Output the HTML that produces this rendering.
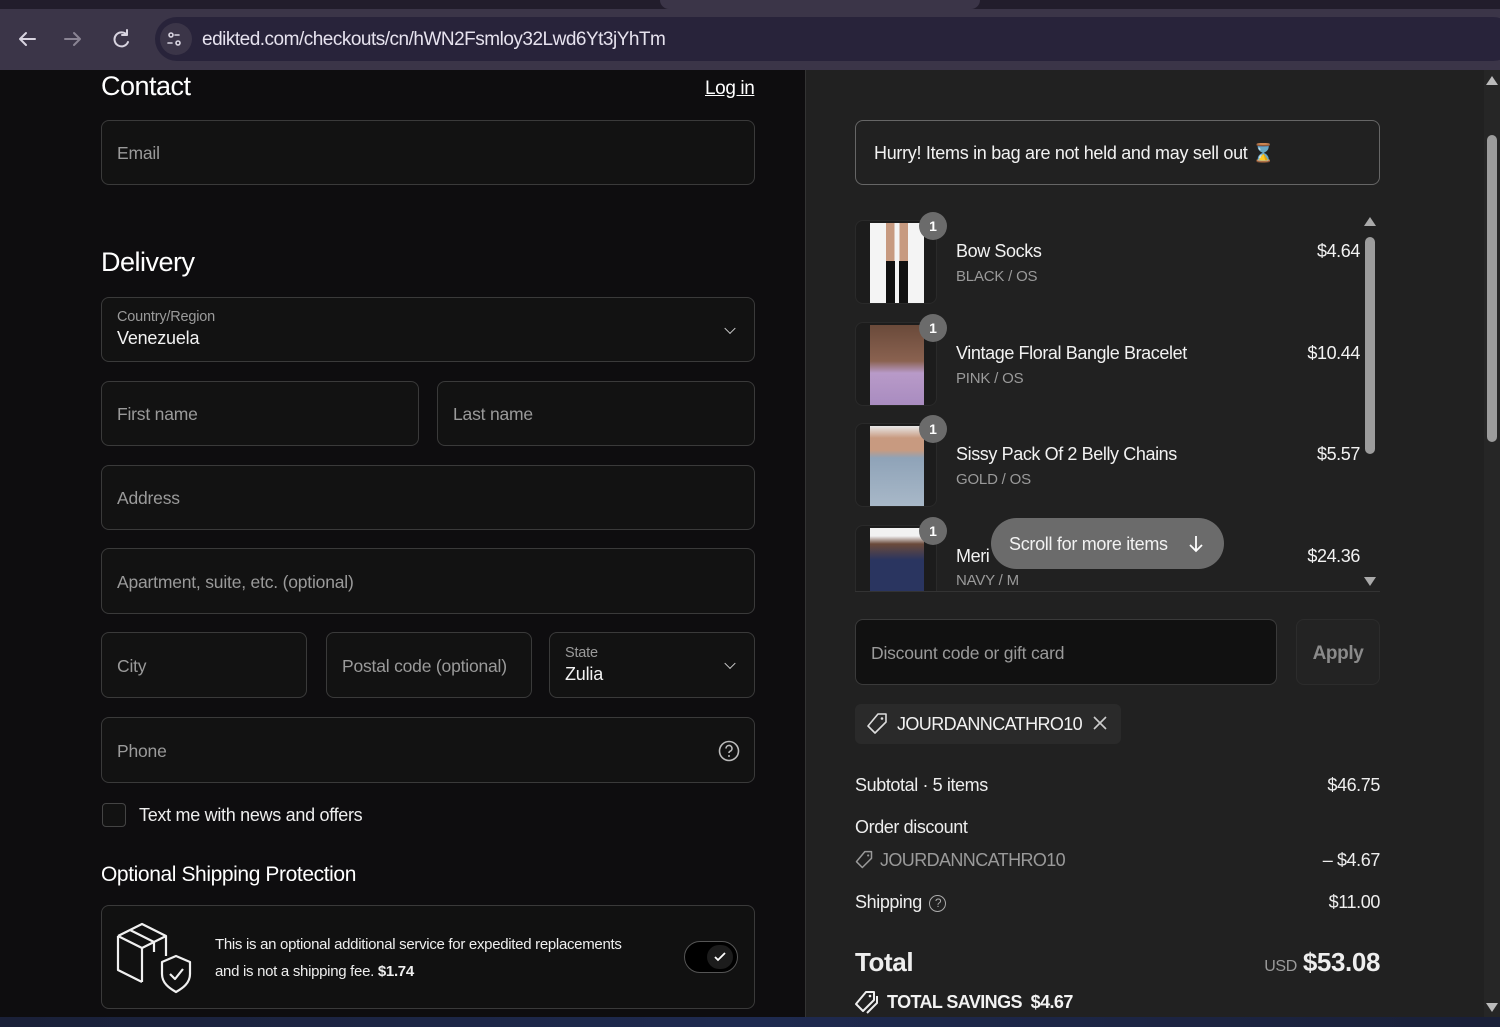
<!DOCTYPE html>
<html><head><meta charset="utf-8"><style>
*{margin:0;padding:0;box-sizing:border-box}
body{width:1500px;height:1027px;overflow:hidden;background:#0e0d0f;font-family:"Liberation Sans",sans-serif;color:#eee;position:relative}
.a{position:absolute}
.inp{position:absolute;background:#121212;border:1px solid #3a3a3a;border-radius:8px;color:#9a9a9a;font-size:17.5px;padding-left:15px;padding-top:2px;display:flex;align-items:center;letter-spacing:-0.2px}
.lbl{font-size:14.5px;color:#9a9a9a}
.chev{position:absolute;right:20px;top:50%;width:8px;height:8px;border-right:1.5px solid #ccc;border-bottom:1.5px solid #ccc;transform:translateY(-70%) rotate(45deg)}
.item{position:absolute;left:855px;width:510px;height:90px}
.thumb{position:absolute;left:0;top:0;width:82px;height:84px;border:1px solid #2a2a2a;border-radius:8px;background:#1c1c1c}
.thumb i{position:absolute;left:14px;top:2px;width:54px;height:80px;display:block}
.badge{position:absolute;left:64px;top:-8px;width:28px;height:28px;border-radius:50%;background:#6b6b6b;color:#fff;font-size:14px;font-weight:bold;text-align:center;line-height:28px}
.nm{position:absolute;left:101px;top:21px;font-size:18px;color:#f2f2f2;letter-spacing:-0.4px}
.vr{position:absolute;left:101px;top:48px;font-size:15px;color:#9a9a9a;letter-spacing:-0.2px}
.pr{position:absolute;right:5px;top:21px;font-size:18px;color:#f2f2f2;letter-spacing:-0.4px}
.row{position:absolute;left:855px;width:525px;font-size:18px;color:#eee;letter-spacing:-0.4px}
.row span{position:absolute;right:0}
</style></head><body>
<div class="a" style="left:0;top:0;width:1500px;height:10px;background:#221d2c"></div>
<div class="a" style="left:660px;top:0;width:320px;height:9px;background:#3b3548;border-radius:0 0 10px 10px"></div>
<div class="a" style="left:0;top:9px;width:1500px;height:61px;background:#3b3548"></div>
<div class="a" style="left:155px;top:17px;width:1360px;height:44px;background:#28233a;border-radius:22px"></div>
<div class="a" style="left:160px;top:23px;width:32px;height:32px;background:#3b3548;border-radius:50%"></div>
<svg class="a" style="left:0;top:25px" width="200" height="30" viewBox="0 0 200 30">
<g fill="none" stroke="#d8d4e0" stroke-width="2" stroke-linecap="round" stroke-linejoin="round">
<path d="M35 14H20M26 8l-6 6 6 6"/>
<path d="M65 14h15M74 8l6 6-6 6" stroke="#8a8494"/>
<path d="M127 10a7 7 0 1 0 1 7M127 5v5h-5"/>
<circle cx="171" cy="10" r="2" stroke-width="1.6"/><path d="M175 10h4M168 18h4" stroke-width="1.6"/><circle cx="178" cy="18" r="2" stroke-width="1.6"/>
</g></svg>
<div class="a" style="left:202px;top:29px;font-size:19px;color:#e6e2ee;letter-spacing:-0.5px">edikted.com/checkouts/cn/hWN2Fsmloy32Lwd6Yt3jYhTm</div>

<div class="a" style="left:805px;top:70px;width:680px;height:947px;background:#212121;border-left:1px solid #333"></div>
<div class="a" style="left:1484px;top:70px;width:16px;height:947px;background:#262626"></div>
<div class="a" style="left:1487px;top:135px;width:10px;height:307px;background:#9c9c9c;border-radius:5px"></div>
<div class="a" style="left:1486px;top:76px;width:0;height:0;border-left:6px solid transparent;border-right:6px solid transparent;border-bottom:9px solid #bbb"></div>
<div class="a" style="left:1486px;top:1003px;width:0;height:0;border-left:6px solid transparent;border-right:6px solid transparent;border-top:9px solid #bbb"></div>
<div class="a" style="left:0;top:1017px;width:1500px;height:10px;background:linear-gradient(90deg,#1a2038,#1e2a50 50%,#1a2038)"></div>

<div class="a" style="left:101px;top:71px;font-size:27px;color:#fff;letter-spacing:-0.5px">Contact</div>
<div class="a" style="left:705px;top:78px;font-size:19px;color:#fff;text-decoration:underline;letter-spacing:-0.4px">Log in</div>
<div class="inp" style="left:101px;top:120px;width:654px;height:65px">Email</div>
<div class="a" style="left:101px;top:247px;font-size:27px;color:#fff;letter-spacing:-0.5px">Delivery</div>
<div class="inp" style="left:101px;top:297px;width:654px;height:65px;display:block;padding-top:11px"><div class="lbl">Country/Region</div><div style="color:#f2f2f2;font-size:18px;margin-top:3px">Venezuela</div><div class="chev"></div></div>
<div class="inp" style="left:101px;top:381px;width:318px;height:65px">First name</div>
<div class="inp" style="left:437px;top:381px;width:318px;height:65px">Last name</div>
<div class="inp" style="left:101px;top:465px;width:654px;height:65px">Address</div>
<div class="inp" style="left:101px;top:548px;width:654px;height:66px">Apartment, suite, etc. (optional)</div>
<div class="inp" style="left:101px;top:632px;width:206px;height:66px">City</div>
<div class="inp" style="left:326px;top:632px;width:206px;height:66px">Postal code (optional)</div>
<div class="inp" style="left:549px;top:632px;width:206px;height:66px;display:block;padding-top:12px"><div class="lbl">State</div><div style="color:#f2f2f2;font-size:18px;margin-top:3px">Zulia</div><div class="chev"></div></div>
<div class="inp" style="left:101px;top:717px;width:654px;height:66px">Phone
<svg class="a" style="right:14px;top:22px" width="22" height="22" viewBox="0 0 22 22"><circle cx="11" cy="11" r="9.5" fill="none" stroke="#bbb" stroke-width="1.6"/><path d="M8 8.5a3 3 0 1 1 4 2.8c-.8.4-1 .9-1 1.7" fill="none" stroke="#bbb" stroke-width="1.6"/><circle cx="11" cy="16" r="1" fill="#bbb"/></svg></div>
<div class="a" style="left:102px;top:803px;width:24px;height:24px;border:1px solid #444;border-radius:4px;background:#121212"></div>
<div class="a" style="left:139px;top:805px;font-size:18px;color:#eee;letter-spacing:-0.3px">Text me with news and offers</div>
<div class="a" style="left:101px;top:863px;font-size:21px;color:#fff;letter-spacing:-0.4px">Optional Shipping Protection</div>
<div class="a" style="left:101px;top:905px;width:654px;height:104px;border:1px solid #3a3a3a;border-radius:8px;background:#111"></div>
<svg class="a" style="left:112px;top:918px" width="82" height="80" viewBox="0 0 82 80"><g fill="none" stroke="#f0f0f0" stroke-width="2.2" stroke-linejoin="round"><path d="M6 18L30 6l24 12v20M6 18v34l24 12M6 18l24 12 24-12M30 30v34M18 12l24 12v10"/><path d="M64 38l14 6v12c0 9-7 14-14 18-7-4-14-9-14-18V44z"/><path d="M58 56l5 5 8-10"/></g></svg>
<div class="a" style="left:215px;top:931px;font-size:15px;color:#eee;line-height:27px;letter-spacing:-0.3px">This is an optional additional service for expedited replacements<br>and is not a shipping fee. <b>$1.74</b></div>
<div class="a" style="left:684px;top:941px;width:54px;height:32px;border-radius:16px;background:#000;border:1px solid #555"></div>
<div class="a" style="left:707px;top:945px;width:26px;height:24px;border-radius:12px;background:#1c1c1c"></div>
<svg class="a" style="left:712px;top:949px" width="16" height="16"><path d="M3 8l3 3 7-7" fill="none" stroke="#fff" stroke-width="1.8"/></svg>

<div class="a" style="left:855px;top:120px;width:525px;height:65px;border:1px solid #666;border-radius:8px"></div>
<div class="a" style="left:874px;top:143px;font-size:18px;color:#f2f2f2;letter-spacing:-0.3px">Hurry! Items in bag are not held and may sell out <span style="color:#e8c07a">⌛</span></div>

<div class="item" style="top:220px"><div class="thumb"><i style="background:linear-gradient(90deg,#f4f4f4 0,#f4f4f4 30%,#c79a80 30%,#c79a80 45%,#f4f4f4 45%,#f4f4f4 55%,#c79a80 55%,#c79a80 70%,#f4f4f4 70%);"></i><i style="top:40px;height:42px;background:linear-gradient(90deg,#f4f4f4 0,#f4f4f4 30%,#111 30%,#111 46%,#f4f4f4 46%,#f4f4f4 54%,#111 54%,#111 70%,#f4f4f4 70%)"></i></div><div class="badge">1</div><div class="nm">Bow Socks</div><div class="vr">BLACK / OS</div><div class="pr">$4.64</div></div>
<div class="item" style="top:322px"><div class="thumb"><i style="background:linear-gradient(180deg,#6a4a3a 0,#8a6250 45%,#b89ac8 60%,#a98cc0 100%)"></i></div><div class="badge">1</div><div class="nm">Vintage Floral Bangle Bracelet</div><div class="vr">PINK / OS</div><div class="pr">$10.44</div></div>
<div class="item" style="top:423px"><div class="thumb"><i style="background:linear-gradient(180deg,#e8e8e8 0,#c89a80 15%,#c89a80 30%,#8fa3b8 40%,#a8b8c8 100%)"></i></div><div class="badge">1</div><div class="nm">Sissy Pack Of 2 Belly Chains</div><div class="vr">GOLD / OS</div><div class="pr">$5.57</div></div>
<div class="a" style="left:855px;top:525px;width:510px;height:66px;overflow:hidden"><div class="thumb"><i style="background:linear-gradient(180deg,#f2f2f2 0,#f2f2f2 10%,#6b4a3a 20%,#2a3560 40%,#2a3560 100%);left:14px;width:54px"></i></div><div class="nm" style="top:21px">Meri</div><div class="vr" style="top:47px">NAVY / M</div><div class="pr" style="top:21px">$24.36</div></div>
<div class="badge" style="left:919px;top:517px">1</div>
<div class="a" style="left:855px;top:591px;width:525px;height:1px;background:#333"></div>
<div class="a" style="left:991px;top:518px;width:233px;height:51px;border-radius:26px;background:#6b6b6b"></div>
<div class="a" style="left:1009px;top:534px;font-size:18px;color:#f2f2f2;letter-spacing:-0.3px">Scroll for more items</div>
<svg class="a" style="left:1187px;top:534px" width="18" height="20"><path d="M9 2v15M3 11l6 6 6-6" fill="none" stroke="#fff" stroke-width="1.8"/></svg>
<div class="a" style="left:1364px;top:217px;width:0;height:0;border-left:6px solid transparent;border-right:6px solid transparent;border-bottom:9px solid #aaa"></div>
<div class="a" style="left:1365px;top:237px;width:10px;height:217px;background:#9c9c9c;border-radius:5px"></div>
<div class="a" style="left:1364px;top:577px;width:0;height:0;border-left:6px solid transparent;border-right:6px solid transparent;border-top:9px solid #aaa"></div>

<div class="inp" style="left:855px;top:619px;width:422px;height:66px;background:#111;color:#9a9a9a">Discount code or gift card</div>
<div class="a" style="left:1296px;top:619px;width:84px;height:66px;border:1px solid #2c2c2c;border-radius:8px;background:#232323;color:#8a8a8a;font-size:19px;font-weight:bold;text-align:center;line-height:68px;letter-spacing:-0.4px">Apply</div>
<div class="a" style="left:855px;top:704px;width:266px;height:40px;border-radius:6px;background:#2a2a2a"></div>
<svg class="a" style="left:865px;top:712px" width="24" height="24" viewBox="0 0 24 24"><path d="M13 2h8v8L10 21 3 14z" fill="none" stroke="#ddd" stroke-width="1.6" stroke-linejoin="round"/><circle cx="17" cy="6.5" r="1.3" fill="#ddd"/></svg>
<div class="a" style="left:897px;top:714px;font-size:18px;color:#f2f2f2;letter-spacing:-0.6px">JOURDANNCATHRO10</div>
<svg class="a" style="left:1092px;top:715px" width="16" height="16"><path d="M2 2l12 12M14 2L2 14" stroke="#ccc" stroke-width="1.6"/></svg>

<div class="row" style="top:775px">Subtotal · 5 items<span>$46.75</span></div>
<div class="row" style="top:817px">Order discount</div>
<svg class="a" style="left:854px;top:850px" width="20" height="20" viewBox="0 0 24 24"><path d="M13 2h8v8L10 21 3 14z" fill="none" stroke="#999" stroke-width="1.8" stroke-linejoin="round"/><circle cx="17" cy="6.5" r="1.3" fill="#999"/></svg>
<div class="row" style="top:850px;left:880px;width:500px;color:#9a9a9a;letter-spacing:-0.6px">JOURDANNCATHRO10<span style="color:#eee;letter-spacing:-0.4px">– $4.67</span></div>
<div class="row" style="top:892px">Shipping <span style="position:static;display:inline-block;width:17px;height:17px;border:1.5px solid #aaa;border-radius:50%;font-size:12px;text-align:center;line-height:14px;color:#aaa;vertical-align:1px;margin-left:3px">?</span><span>$11.00</span></div>
<div class="row" style="top:947px;font-size:26px;font-weight:bold">Total<span><small style="font-size:16px;font-weight:normal;color:#9a9a9a;margin-right:6px">USD</small>$53.08</span></div>
<svg class="a" style="left:854px;top:990px" width="26" height="24" viewBox="0 0 26 24"><path d="M12 2h8v8L9 21 2 14z" fill="none" stroke="#eee" stroke-width="2" stroke-linejoin="round"/><path d="M23 6v7L13 23" fill="none" stroke="#eee" stroke-width="2"/><circle cx="16" cy="6" r="1.3" fill="#eee"/></svg>
<div class="a" style="left:887px;top:992px;font-size:18px;font-weight:bold;color:#f2f2f2;letter-spacing:-0.6px">TOTAL SAVINGS&nbsp; $4.67</div>
</body></html>
